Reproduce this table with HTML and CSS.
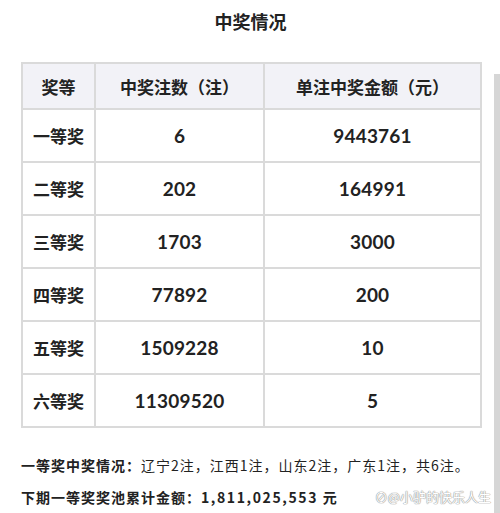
FILE: index.html
```html
<!DOCTYPE html>
<html lang="zh-CN">
<head>
<meta charset="utf-8">
<title>中奖情况</title>
<link rel="stylesheet" href="styles.css">
</head>
<body>
<div class="page">
  <h1 class="title">中奖情况</h1>
  <table class="prize">
    <colgroup>
      <col class="c1"><col class="c2"><col class="c3">
    </colgroup>
    <thead>
      <tr><th>奖等</th><th>中奖注数（注）</th><th>单注中奖金额（元）</th></tr>
    </thead>
    <tbody>
      <tr><td>一等奖</td><td class="num">6</td><td class="num">9443761</td></tr>
      <tr><td>二等奖</td><td class="num">202</td><td class="num">164991</td></tr>
      <tr><td>三等奖</td><td class="num">1703</td><td class="num">3000</td></tr>
      <tr><td>四等奖</td><td class="num">77892</td><td class="num">200</td></tr>
      <tr><td>五等奖</td><td class="num">1509228</td><td class="num">10</td></tr>
      <tr><td>六等奖</td><td class="num">11309520</td><td class="num">5</td></tr>
    </tbody>
  </table>
  <p class="note"><b>一等奖中奖情况：</b>辽宁2注，江西1注，山东2注，广东1注，共6注。</p>
  <div class="note2">
    <b>下期一等奖奖池累计金额：<span class="amt">1,811,025,553 元</span></b>
    <span class="mark">&#x2298;@小驴的快乐人生</span>
  </div>
</div>
<div class="scrollbar"></div>
</body>
</html>
```
FILE: styles.css
```css
html, body {
  margin: 0;
  padding: 0;
  background: #ffffff;
}
body {
  font-family: Lato, "Noto Sans CJK SC", sans-serif;
  color: #222222;
  width: 500px;
  height: 513px;
  overflow: hidden;
  position: relative;
}
.page {
  padding: 9px 20px 0 21px;
}
.title {
  margin: 0;
  font-size: 18px;
  line-height: 24px;
  font-weight: 700;
  text-align: center;
  font-family: "Noto Sans CJK SC", sans-serif;
}
.prize {
  margin-top: 29px;
  width: 459px;
  border-collapse: collapse;
  table-layout: fixed;
}
.c1 { width: 73px; }
.c2 { width: 169px; }
.c3 { width: 217px; }
.prize th, .prize td {
  border: 2px solid #dadada;
  text-align: center;
  padding: 0;
  font-weight: 700;
  font-size: 17px;
  font-family: "Noto Sans CJK SC", sans-serif;
}
.prize th {
  background: #f2f2f7;
  height: 44px;
}
.prize td {
  height: 51px;
}
.prize td.num {
  font-family: Lato, "Noto Sans CJK SC", sans-serif;
  font-size: 19px;
  letter-spacing: 0.2px;
}
.note {
  margin: 27px 0 0 0;
  font-size: 14px;
  line-height: 20px;
  font-family: "Noto Sans CJK SC", sans-serif;
  letter-spacing: 1px;
}
.note b { font-weight: 700; }
.note2 {
  margin-top: 12px;
  display: flex;
  justify-content: space-between;
  align-items: center;
  font-size: 14px;
  line-height: 20px;
  font-family: "Noto Sans CJK SC", sans-serif;
  letter-spacing: 1px;
}
.amt {
  letter-spacing: 1.6px;
}
.mark {
  font-size: 13px;
  color: #ffffff;
  text-shadow: 0 0 1px #9a9a9a, 0 0 1px #9a9a9a, 0 0 1px #9a9a9a;
  margin-right: -11px;
  letter-spacing: 0;
}
.scrollbar {
  position: absolute;
  right: 0;
  top: 74px;
  width: 6px;
  height: 439px;
  background: #d6d6d6;
}
```
